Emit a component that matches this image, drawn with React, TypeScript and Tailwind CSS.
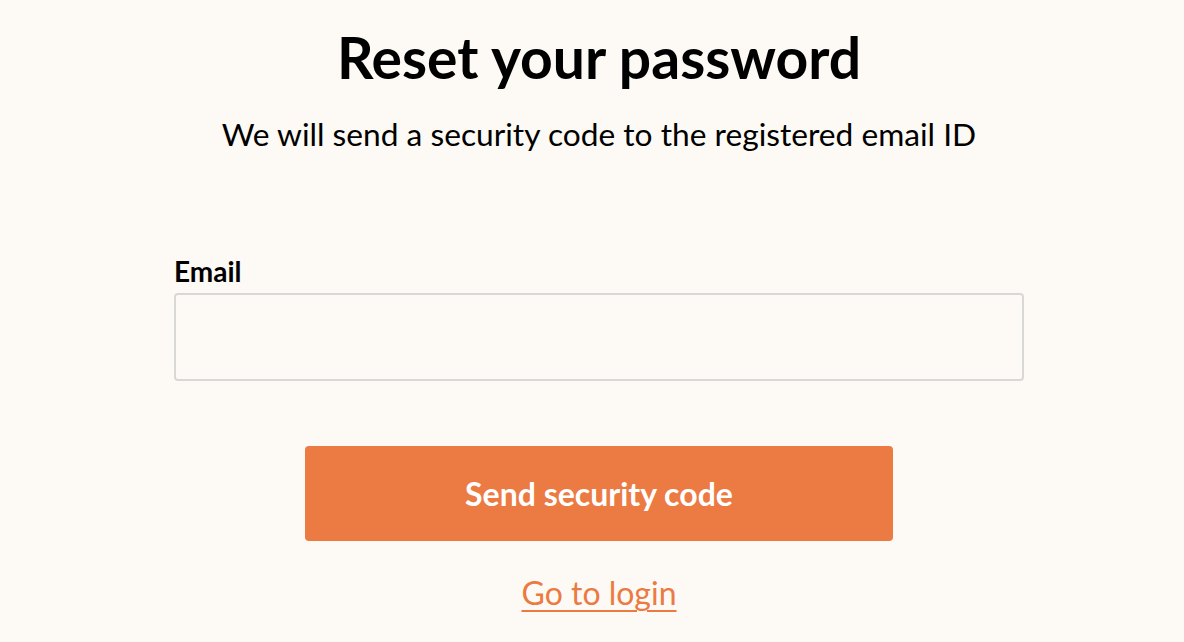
export default function App() {
  return (
    <div
      className="min-h-[642px] w-full bg-[#fdfaf5] text-black"
      style={{ fontFamily: "Lato, 'Noto Sans', sans-serif" }}
    >
      <div className="ml-[174px] flex w-[850px] flex-col items-center pt-[23px]">
        <h1 className="text-[57px] font-bold leading-[68px]">Reset your password</h1>
        <p className="mt-[23px] text-[31.7px] leading-[40px]">
          We will send a security code to the registered email ID
        </p>
        <div className="mt-[100px] flex w-full flex-col">
          <label className="text-[28px] font-bold leading-[34px]">Email</label>
          <input
            type="email"
            className="mt-[5px] h-[88px] w-full rounded-[4px] border-2 border-[#d8d8d6] bg-transparent px-4 text-[24px] outline-none"
          />
        </div>
        <button className="mt-[65px] h-[95px] w-[588px] rounded-[4px] bg-[#ec7a43] text-[32px] font-bold text-white">
          Send security code
        </button>
        <a
          href="#"
          className="mt-[32px] text-[32px] leading-[40px] text-[#ec7a43] underline decoration-2 underline-offset-[5px]"
        >
          Go to login
        </a>
      </div>
    </div>
  );
}
